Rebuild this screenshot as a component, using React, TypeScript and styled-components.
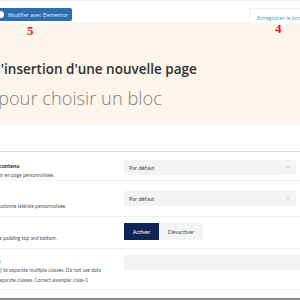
import React from "react";
import styled, { createGlobalStyle } from "styled-components";

const Global = createGlobalStyle`
  html, body { margin: 0; padding: 0; background: #fff; }
  body { width: 300px; height: 300px; overflow: hidden; font-family: "Open Sans", "Liberation Sans", sans-serif; }
`;

const Page = styled.div`
  position: relative;
  width: 300px;
  height: 300px;
  overflow: hidden;
  display: flex;
  flex-direction: column;
  & > * { flex: none; }
`;

const TopBar = styled.div`
  height: 23px;
  display: flex;
  align-items: flex-start;
  justify-content: space-between;
  background: #fff;
  border-top: 1px solid #ececec;
  box-sizing: border-box;
`;

const EditButton = styled.div`
  margin: 7px 0 0 -6px;
  height: 13px;
  width: 78px;
  box-sizing: border-box;
  background: #2d6db0;
  border-radius: 2px;
  display: flex;
  align-items: center;
  gap: 4px;
  padding-left: 3px;
  color: #e8f0f8;
  font-size: 5.3px;
  font-family: "Open Sans", sans-serif;
  white-space: nowrap;
`;

const LogoDot = styled.span`
  width: 7px;
  height: 7px;
  border-radius: 50%;
  background: #fff;
  flex: none;
`;

const DraftButton = styled.div`
  margin-top: 7px;
  height: 18px;
  width: 51px;
  box-sizing: border-box;
  border: 1px solid #f0f0f0;
  border-right: none;
  padding: 5px 0 0 7px;
  color: #4d8fcc;
  font-size: 5.4px;
  white-space: nowrap;
  overflow: hidden;
`;

const Marker = styled.span<{ $x: number; $y: number }>`
  position: absolute;
  left: ${(p) => p.$x}px;
  top: ${(p) => p.$y}px;
  color: #ee1111;
  font-family: "Liberation Serif", serif;
  font-weight: bold;
  font-size: 13px;
  line-height: 1;
`;

const Hero = styled.div`
  height: 102px;
  background: #fcf5ec;
  padding-top: 38px;
  box-sizing: border-box;
  display: flex;
  flex-direction: column;
`;

const HeroTitle = styled.div`
  margin-left: -3px;
  font-size: 13.5px;
  font-weight: 600;
  color: #2f2f2f;
  line-height: 17px;
  white-space: nowrap;
`;

const HeroSub = styled.div`
  margin-left: -2px;
  margin-top: 9px;
  font-size: 18.3px;
  font-weight: 300;
  color: #85807b;
  line-height: 22px;
  white-space: nowrap;
`;

const Settings = styled.div`
  margin-top: 26px;
  border-top: 1px solid #dcdcdc;
  display: flex;
  flex-direction: column;
`;

const Row = styled.div<{ $pt: number; $h: number }>`
  display: grid;
  grid-template-columns: 124px 1fr;
  height: ${(p) => p.$h}px;
  box-sizing: border-box;
  padding-top: ${(p) => p.$pt}px;
  border-bottom: 1px solid #f0f0f0;
`;

const Left = styled.div<{ $pt: number }>`
  padding-top: ${(p) => p.$pt}px;
  display: flex;
  flex-direction: column;
  gap: 3px;
  white-space: nowrap;
  font-family: "Lato", "Open Sans", sans-serif;
`;

const Label = styled.div<{ $shift?: number }>`
  margin-left: ${(p) => p.$shift ?? 0}px;
  font-size: 5.6px;
  font-weight: 700;
  color: #23282d;
  min-height: 7px;
  line-height: 7px;
`;

const Desc = styled.div<{ $shift?: number }>`
  margin-left: ${(p) => p.$shift ?? 0}px;
  font-size: 5px;
  color: #555;
  line-height: 7px;
`;

const Select = styled.div`
  width: 172px;
  height: 15px;
  background: #f3f3f3;
  display: flex;
  align-items: center;
  justify-content: space-between;
  padding: 0 6px 0 5px;
  box-sizing: border-box;
  font-family: "Lato", sans-serif;
  font-size: 5.6px;
  color: #444;
`;

const Toggle = styled.div`
  display: flex;
  height: 17px;
`;

const ToggleBtn = styled.div<{ $active?: boolean }>`
  display: flex;
  align-items: center;
  justify-content: center;
  width: ${(p) => (p.$active ? 35 : 44)}px;
  background: ${(p) => (p.$active ? "#112457" : "#f3f3f3")};
  color: ${(p) => (p.$active ? "#fff" : "#555")};
  font-family: "Lato", sans-serif;
  font-size: 5.6px;
`;

const Input = styled.div`
  width: 180px;
  height: 15px;
  background: #f3f3f3;
`;

const BottomBar = styled.div`
  margin-top: 8px;
  height: 10px;
  background: #8a8a8a;
`;

const Chevron = () => (
  <svg width="4" height="3" viewBox="0 0 4 3">
    <path d="M0.5 0.8 L2 2.2 L3.5 0.8" stroke="#999" strokeWidth="0.6" fill="none" />
  </svg>
);

export default function App() {
  return (
    <>
      <Global />
      <Page>
        <TopBar>
          <EditButton>
            <LogoDot />
            Modifier avec Elementor
          </EditButton>
          <DraftButton>Enregistrer le brouillon</DraftButton>
        </TopBar>
        <Hero>
          <HeroTitle>l'insertion d'une nouvelle page</HeroTitle>
          <HeroSub>pour choisir un bloc</HeroSub>
        </Hero>
        <Settings>
          <Row $pt={8} $h={29}>
            <Left $pt={2}>
              <Label $shift={-1}>contenu</Label>
              <Desc $shift={-3}>isir en page personnalisée.</Desc>
            </Left>
            <Select>
              Par défaut
              <Chevron />
            </Select>
          </Row>
          <Row $pt={10} $h={36}>
            <Left $pt={2}>
              <Label />
              <Desc $shift={-1}>colonne latérale personnalisée.</Desc>
            </Left>
            <Select>
              Par défaut
              <Chevron />
            </Select>
          </Row>
          <Row $pt={6} $h={32}>
            <Left $pt={2}>
              <Label />
              <Desc $shift={-1}>e padding top and bottom.</Desc>
            </Left>
            <Toggle>
              <ToggleBtn $active>Activer</ToggleBtn>
              <ToggleBtn>Désactiver</ToggleBtn>
            </Toggle>
          </Row>
          <Row $pt={6} $h={41}>
            <Left $pt={2}>
              <Label $shift={-2}>s</Label>
              <Desc $shift={-2}>g) to separate multiple classes. Do not use dots</Desc>
              <Desc $shift={-1}>eparate classes. Correct example: class-1</Desc>
            </Left>
            <Input />
          </Row>
        </Settings>
        <BottomBar />
        <Marker $x={27} $y={24}>5</Marker>
        <Marker $x={275} $y={22}>4</Marker>
      </Page>
    </>
  );
}
